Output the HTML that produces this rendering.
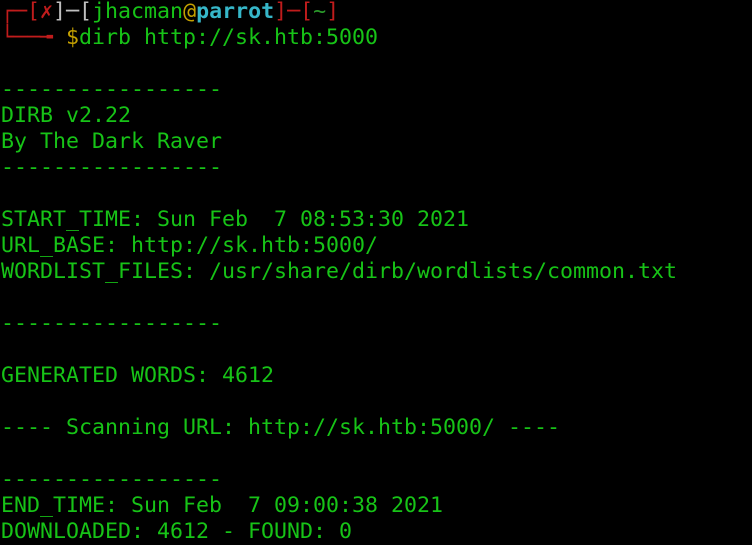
<!DOCTYPE html>
<html><head><style>
html,body{margin:0;padding:0;background:#000;width:752px;height:545px;overflow:hidden}
pre{margin:-1px 0 0 1px;font-family:"DejaVu Sans Mono","Liberation Mono",monospace;font-size:21.6px;line-height:26px;color:#17c317;white-space:pre}
.r{color:#c01c1c}.w{color:#bfbfbf}.y{color:#c4a000}.c{color:#36b7c9;font-weight:bold}
</style></head><body><pre><span class="r">┌─[</span><span class="r">✗</span><span class="w">]─[</span>jhacman<span class="y">@</span><span class="c">parrot</span><span class="r">]─[</span><span style="color:#2a9a2a">~</span><span class="r">]</span>
<span class="r">└──╼ </span><span class="y">$</span>dirb http://sk.htb:5000

-----------------
DIRB v2.22
By The Dark Raver
-----------------

START_TIME: Sun Feb  7 08:53:30 2021
URL_BASE: http://sk.htb:5000/
WORDLIST_FILES: /usr/share/dirb/wordlists/common.txt

-----------------

GENERATED WORDS: 4612

---- Scanning URL: http://sk.htb:5000/ ----

-----------------
END_TIME: Sun Feb  7 09:00:38 2021
DOWNLOADED: 4612 - FOUND: 0</pre></body></html>
